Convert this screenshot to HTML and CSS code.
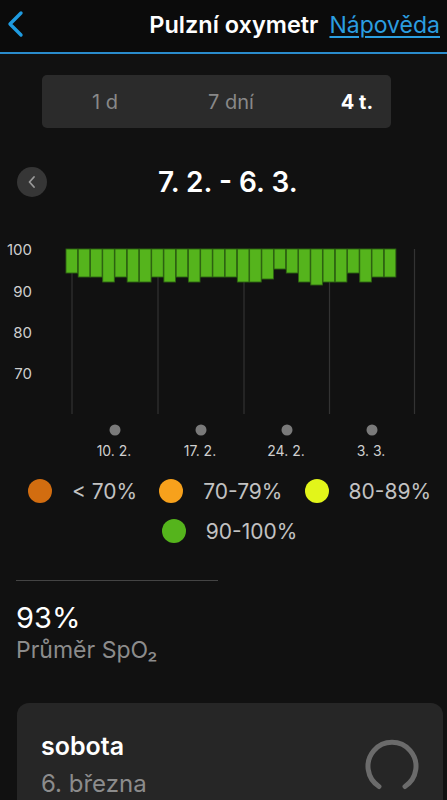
FILE: index.html
```html
<!DOCTYPE html>
<html lang="cs">
<head>
<meta charset="utf-8">
<link rel="stylesheet" href="styles.css">
</head>
<body>
<header class="topbar">
  <svg class="back" width="20" height="28" viewBox="0 0 20 28"><path d="M15 3 L4 14 L15 25" fill="none" stroke="#1f9be0" stroke-width="3.4" stroke-linecap="round" stroke-linejoin="round"/></svg>
  <div class="topbar-right">
    <span class="title">Pulzní oxymetr</span>
    <a class="help">Nápověda</a>
  </div>
</header>

<div class="segmented">
  <span class="seg">1 d</span>
  <span class="seg">7 dní</span>
  <span class="seg active">4 t.</span>
</div>

<div class="range">
  <span class="prev"><svg width="10" height="14" viewBox="0 0 10 14"><path d="M7 2 L2.5 7 L7 12" fill="none" stroke="#9a9a9a" stroke-width="1.8" stroke-linecap="round" stroke-linejoin="round"/></svg></span>
  <span class="range-title">7. 2. - 6. 3.</span>
</div>

<svg class="chart" width="447" height="230" viewBox="0 0 447 230" id="chart">
  <g class="ylabels">
    <text x="32" y="22" text-anchor="end">100</text>
    <text x="32" y="64" text-anchor="end">90</text>
    <text x="32" y="105" text-anchor="end">80</text>
    <text x="32" y="146" text-anchor="end">70</text>
  </g>
  <g stroke="#333" stroke-width="1.2">
    <line x1="72" y1="16" x2="72" y2="181"/>
    <line x1="158" y1="16" x2="158" y2="181"/>
    <line x1="244" y1="16" x2="244" y2="181"/>
    <line x1="329.5" y1="16" x2="329.5" y2="181"/>
    <line x1="414.5" y1="16" x2="414.5" y2="181"/>
  </g>
  <g id="bars" fill="#55b41c" stroke="#2e6412" stroke-width="0.9"></g>
  <g fill="#7a7a7a">
    <circle cx="115" cy="197" r="5.5"/>
    <circle cx="201" cy="197" r="5.5"/>
    <circle cx="287" cy="197" r="5.5"/>
    <circle cx="372" cy="197" r="5.5"/>
  </g>
  <g class="xlabels" text-anchor="middle">
    <text x="114" y="223">10. 2.</text>
    <text x="200" y="223">17. 2.</text>
    <text x="286" y="223">24. 2.</text>
    <text x="371" y="223">3. 3.</text>
  </g>
</svg>

<div class="legend">
  <span class="item"><i class="dot c1"></i>&lt; 70%</span>
  <span class="item"><i class="dot c2"></i>70-79%</span>
  <span class="item"><i class="dot c3"></i>80-89%</span>
  <span class="item"><i class="dot c4"></i>90-100%</span>
</div>

<div class="summary">
  <div class="divider"></div>
  <div class="value">93%</div>
  <div class="label">Průměr SpO₂</div>
</div>

<div class="card">
  <div class="card-text">
    <div class="day">sobota</div>
    <div class="date">6. března</div>
  </div>
  <svg class="ring" width="58" height="58" viewBox="0 0 58 58"><path d="M16 48.5 A24 24 0 1 1 42 48.5" fill="none" stroke="#6b6b6b" stroke-width="5" stroke-linecap="round"/></svg>
</div>

<script>
  var h = [24,28,28,33,28,33,33,28,33,28,33,28,28,28,33,33,30,20,24,33,36,33,33,24,33,28,28];
  var g = document.getElementById('bars');
  var ns = 'http://www.w3.org/2000/svg';
  h.forEach(function (v, i) {
    var r = document.createElementNS(ns, 'rect');
    r.setAttribute('x', (66 + i * 12.24).toFixed(2));
    r.setAttribute('y', 16);
    r.setAttribute('width', 11.6);
    r.setAttribute('height', v);
    g.appendChild(r);
  });
</script>
</body>
</html>
```

FILE: styles.css
```css
* { box-sizing: border-box; }
html, body {
  margin: 0;
  padding: 0;
  background: #111111;
  color: #fff;
  font-family: Inter, "Noto Sans", "DejaVu Sans", sans-serif;
  width: 447px;
  height: 800px;
  overflow: hidden;
}
.topbar {
  height: 54px;
  border-bottom: 2px solid #2a8ccc;
  background: #0b0b0b;
  display: flex;
  align-items: center;
  justify-content: space-between;
  padding: 0 7px 4px 6px;
}
.back { display: block; }
.topbar-right { display: flex; align-items: baseline; gap: 11px; }
.title { font-size: 23.5px; font-weight: 600; color: #fff; }
.help { font-size: 23px; color: #2b9ee0; text-decoration: underline; text-underline-offset: 3px; text-decoration-thickness: 1.5px; }

.segmented {
  margin: 21px 0 0 42px;
  width: 349px;
  height: 53px;
  background: #2b2b2b;
  border-radius: 5px;
  display: grid;
  grid-template-columns: repeat(3, 126px);
  align-items: center;
}
.seg { text-align: center; font-size: 20px; color: #888; }
.seg.active { color: #fff; font-weight: 700; }

.range {
  margin-top: 39px;
  height: 30px;
  display: flex;
  align-items: center;
  padding-left: 17px;
}
.prev {
  width: 30px; height: 30px;
  border-radius: 50%;
  background: #363636;
  display: flex; align-items: center; justify-content: center;
}
.prev svg { margin-left: -1px; }
.range-title {
  margin-left: 111px;
  font-size: 28px;
  font-weight: 600;
  color: #fff;
}

.chart { display: block; margin-top: 36px; }
.chart text { font-family: Inter, "Noto Sans", sans-serif; }
.ylabels text { font-size: 15px; fill: #cfcfcf; }
.xlabels text { font-size: 14px; fill: #cfcfcf; }

.legend {
  margin-top: 16px;
  display: flex;
  flex-wrap: wrap;
  justify-content: center;
  column-gap: 22px;
  row-gap: 16px;
  padding-left: 12px;
  font-size: 21px;
  color: #c2c2c2;
}
.item { display: flex; align-items: center; gap: 20px; height: 24px; }
.dot { display: block; width: 24px; height: 24px; border-radius: 50%; }
.c1 { background: #d26d10; }
.c2 { background: #f7a11c; }
.c3 { background: #e2f51a; }
.c4 { background: #55b41c; }

.summary { padding-left: 16px; margin-top: 37px; }
.divider { width: 202px; height: 1px; background: #444; }
.value { margin-top: 20px; font-size: 29px; color: #fff; line-height: 34px; }
.label { font-size: 23px; color: #8c8c8c; line-height: 30px; }

.card {
  margin: 38px 4px 0 17px;
  height: 97px;
  overflow: hidden;
  background: #262626;
  border-radius: 12px 12px 0 0;
  display: flex;
  justify-content: space-between;
  padding: 28px 22px 0 24px;
}
.day { font-size: 25px; font-weight: 600; color: #fff; line-height: 30px; }
.date { font-size: 24px; color: #8c8c8c; line-height: 30px; margin-top: 8px; }
.ring { margin-top: 7px; flex-shrink: 0; }
```
